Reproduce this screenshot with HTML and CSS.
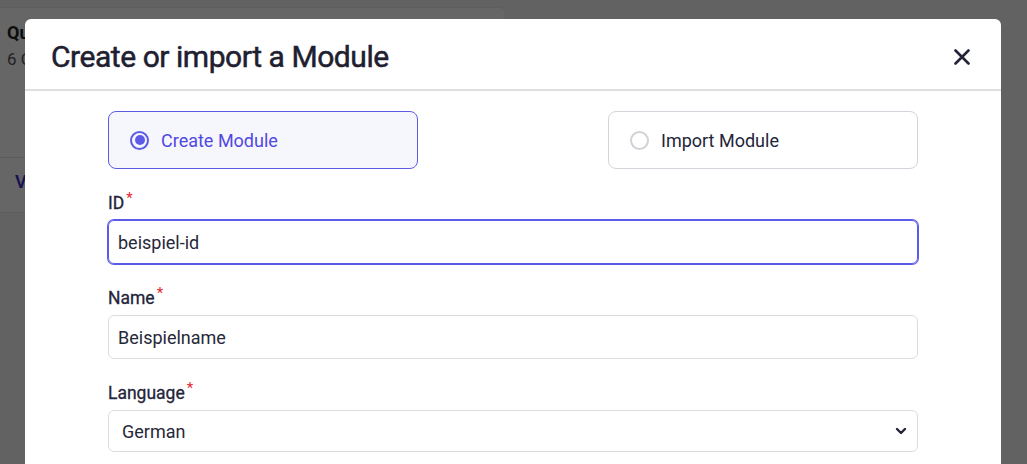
FILE: index.html
```html
<!DOCTYPE html>
<html lang="en">
<head>
<meta charset="utf-8">
<title>Create or import a Module</title>
<link rel="stylesheet" href="styles.css">
</head>
<body>
<div class="page">
  <div class="card">
    <div class="card-body">
      <div class="card-title">Quiz</div>
      <div class="card-sub">6 Q</div>
    </div>
    <div class="card-footer"><span class="card-link">View</span></div>
  </div>
</div>

<div class="overlay">
  <div class="modal">
    <div class="modal-header">
      <h1 class="modal-title">Create or import a Module</h1>
      <button class="close-btn" aria-label="Close">
        <svg width="16" height="16" viewBox="0 0 16 16"><path d="M1.5 1.5 L14.5 14.5 M14.5 1.5 L1.5 14.5" stroke="#23243a" stroke-width="2.6" stroke-linecap="round" fill="none"/></svg>
      </button>
    </div>
    <div class="modal-body">
      <div class="choices">
        <label class="choice selected">
          <span class="radio on"><span class="dot"></span></span>
          <span class="choice-text">Create Module</span>
        </label>
        <label class="choice">
          <span class="radio"></span>
          <span class="choice-text">Import Module</span>
        </label>
      </div>

      <div class="field">
        <div class="label">ID<span class="req">*</span></div>
        <div class="input focused">beispiel-id</div>
      </div>
      <div class="field">
        <div class="label">Name<span class="req">*</span></div>
        <div class="input">Beispielname</div>
      </div>
      <div class="field">
        <div class="label">Language<span class="req">*</span></div>
        <div class="select">
          <span>German</span>
          <svg width="12" height="8" viewBox="0 0 12 8"><path d="M2 2 L6 6 L10 2" stroke="#23243a" stroke-width="2.4" fill="none" stroke-linecap="round" stroke-linejoin="round"/></svg>
        </div>
      </div>
    </div>
  </div>
</div>
</body>
</html>
```

FILE: styles.css
```css
* { box-sizing: border-box; }
html, body { margin: 0; padding: 0; }
body {
  background: #f4f4f4;
  font-family: Roboto, "Liberation Sans", Arial, sans-serif;
  color: #1f2133;
  overflow: hidden;
  height: 464px;
}

.page { padding-top: 7px; }

.card {
  width: 514px;
  margin-left: -8px;
  background: #ffffff;
  border: 1px solid #ececec;
  border-radius: 6px;
}
.card-body {
  height: 150px;
  padding: 14px 14px;
  border-bottom: 1px solid #e4e4e4;
}
.card-title {
  font-size: 18px;
  font-weight: 700;
  line-height: 22px;
  color: #222;
}
.card-sub {
  margin-top: 4px;
  font-size: 17px;
  line-height: 22px;
  color: #555;
}
.card-footer {
  height: 54px;
  padding: 13px 22px;
}
.card-link {
  font-size: 18px;
  font-weight: 600;
  color: #3b32c9;
}

.overlay {
  position: fixed;
  inset: 0;
  background: rgba(0, 0, 0, 0.6);
}

.modal {
  position: absolute;
  left: 25px;
  top: 19px;
  width: 976px;
  height: 600px;
  background: #ffffff;
  border-radius: 6px;
}

.modal-header {
  height: 72px;
  border-bottom: 2px solid #dedede;
  display: flex;
  align-items: center;
  justify-content: space-between;
  padding: 4px 31px 0 26px;
}
.modal-title {
  margin: 0;
  font-size: 30px;
  font-weight: 400;
  -webkit-text-stroke: 0.5px #1e2030;
  color: #1e2030;
  letter-spacing: -0.45px;
}
.close-btn {
  border: 0;
  background: none;
  padding: 0;
  margin-top: 2px;
  width: 16px;
  height: 16px;
  display: flex;
}

.modal-body {
  width: 810px;
  margin: 0 auto;
  padding-top: 20px;
}

.choices {
  display: flex;
  justify-content: space-between;
  margin-bottom: 17px;
}
.choice {
  width: 310px;
  height: 58px;
  border: 1px solid #d3d5dd;
  border-radius: 8px;
  display: flex;
  align-items: center;
  padding-left: 21px;
  gap: 12px;
  font-size: 18px;
  color: #23253a;
}
.choice.selected {
  border-color: #5b5be8;
  background: #f6f7fc;
  color: #5148e2;
}
.radio {
  width: 19px;
  height: 19px;
  border: 2px solid #d0d2d8;
  border-radius: 50%;
  display: flex;
  align-items: center;
  justify-content: center;
}
.radio.on { border-color: #5b5be8; }
.radio .dot {
  width: 10px;
  height: 10px;
  border-radius: 50%;
  background: #5b5be8;
}

.field { margin-bottom: 17px; }
.label {
  font-size: 17.5px;
  font-weight: 400;
  -webkit-text-stroke: 0.3px #23253a;
  line-height: 24px;
  margin-bottom: 5px;
  color: #23253a;
}
.req {
  color: #e8262f;
  -webkit-text-stroke: 0;
  font-size: 15px;
  vertical-align: 6px;
  margin-left: 2px;
  font-weight: 400;
}
.input {
  height: 44px;
  border: 1px solid #dcdcdc;
  border-radius: 6px;
  padding: 0 9px;
  display: flex;
  align-items: center;
  font-size: 18px;
  color: #262838;
}
.input.focused {
  border-color: #5b5be8;
  box-shadow: 0 0 0 1px #5b5be8;
}
.select {
  height: 42px;
  border: 1px solid #dcdcdc;
  border-radius: 6px;
  padding: 0 10px 0 13px;
  display: flex;
  align-items: center;
  justify-content: space-between;
  font-size: 18px;
  color: #262838;
}
```
